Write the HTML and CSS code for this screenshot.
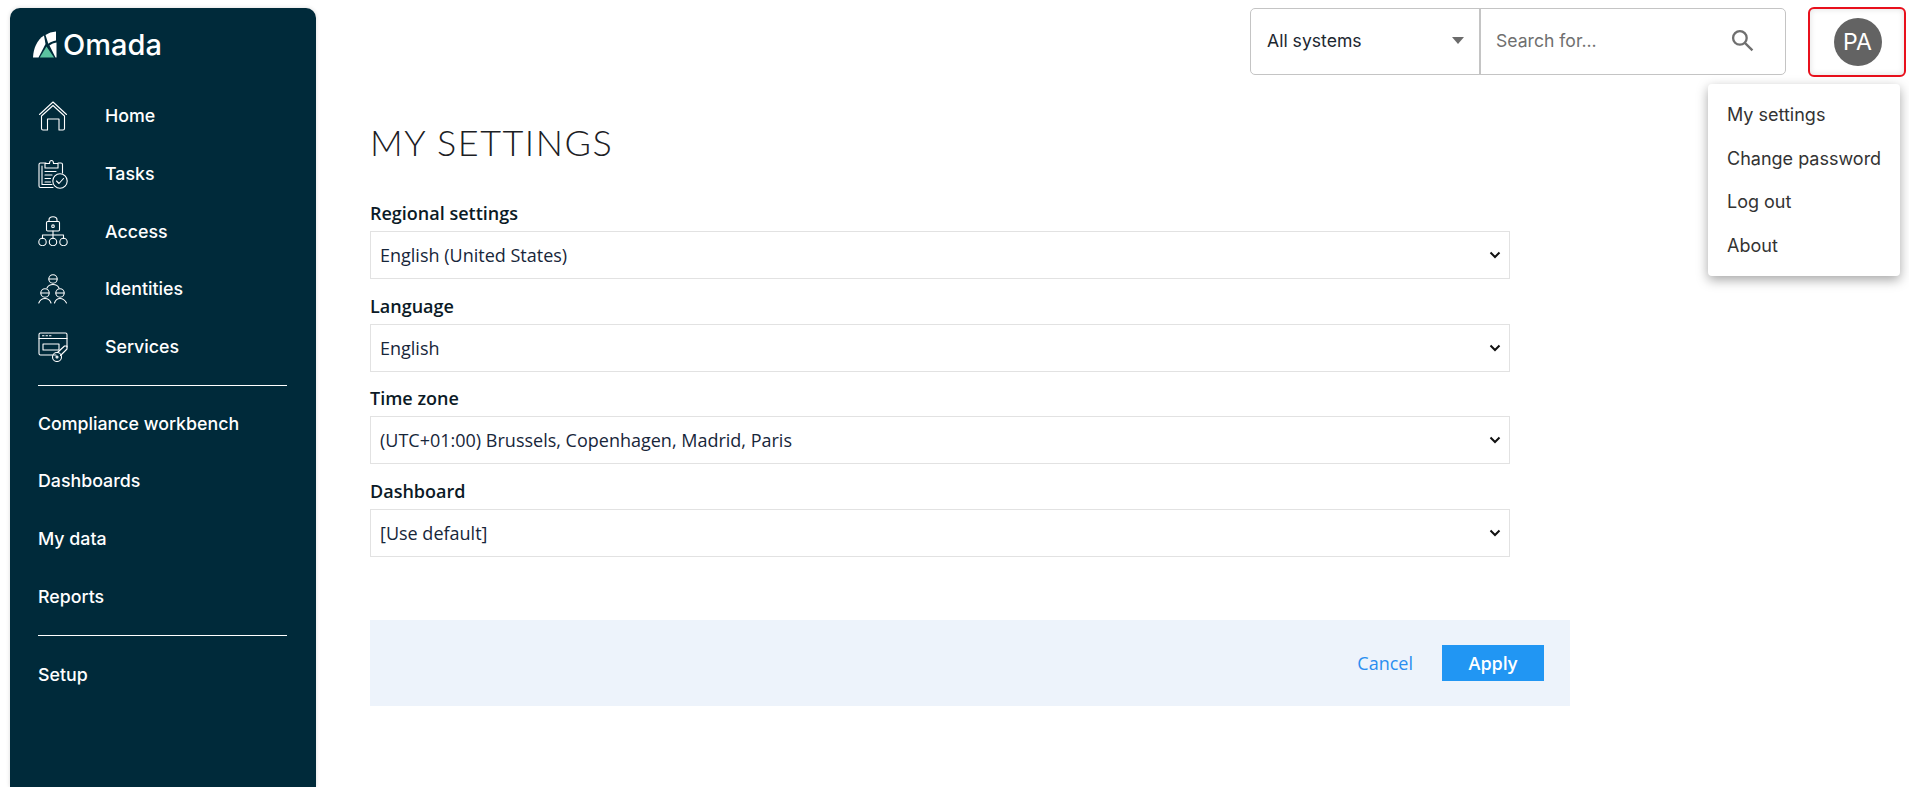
FILE: index.html
```html
<!DOCTYPE html>
<html lang="en">
<head>
<meta charset="utf-8">
<title>My settings</title>
<link rel="stylesheet" href="styles.css">
</head>
<body>
<div class="app">
  <aside class="sidebar">
    <div class="logo">
      <svg class="logo-mark" viewBox="0 0 24 27" width="24" height="27">
        <path fill="#fff" d="M0 26.500C.5 17 4 9 11 4.500L12.500 13 5.500 26.500Z"/>
        <path fill="#fff" d="M12.500 4C15.500 2 19 .8 23 .5V9.500C20 10 17.500 11 15.300 12.800Z"/>
        <path fill="#fff" d="M16.500 14.500C18.500 13 20.800 11.800 23.500 11.500V26.500H22.500Z"/>
        <path fill="#5cc3a0" d="M13.500 15.500 21 26.500H6.800Z"/>
      </svg>
      <span class="logo-text">Omada</span>
    </div>
    <nav class="nav">
      <a class="nav-item">
        <svg class="nav-icon" viewBox="0 0 30 30"><path d="M1.500 13.500 15 1 28.500 13.500"/><path d="M3.500 15 15 4.500 26.500 15V27.500Q26.500 29 25 29H21V18H9.500V29H5Q3.500 29 3.500 27.500Z"/></svg>
        <span>Home</span>
      </a>
      <a class="nav-item">
        <svg class="nav-icon" viewBox="0 0 30 30"><path d="M8 4H2.500Q1 4 1 5.500V27Q1 28.500 2.500 28.500H15"/><path d="M20 4H23Q24.500 4 24.500 5.500V14"/><path d="M4 7V25.500H14"/><path d="M7 4.500H11.500C11.500 .5 15.500 .5 15.500 4.500H20V9H7Z"/><path d="M7 12.500H18M7 16H14M7 19.500H12.500M7 23H12.500"/><circle cx="22" cy="22" r="7.200"/><path d="M18.500 22 21 24.500 25.500 19.500"/></svg>
        <span>Tasks</span>
      </a>
      <a class="nav-item">
        <svg class="nav-icon" viewBox="0 0 30 30"><rect x="8.500" y="5.500" width="13" height="9.500" rx="1.200"/><path d="M11 5.500V4Q11 .8 15 .8T19 4V5.500"/><circle cx="15" cy="10.200" r="1.300"/><path d="M15 15V22.500M4.500 22.500V19H25.500V22.500"/><circle cx="4.500" cy="26" r="3.700"/><circle cx="15" cy="26" r="3.700"/><circle cx="25.500" cy="26" r="3.700"/></svg>
        <span>Access</span>
      </a>
      <a class="nav-item">
        <svg class="nav-icon" viewBox="0 0 30 30"><circle cx="15" cy="5" r="4.200"/><path d="M11 5H19M9 14Q10.500 10.500 15 10.500T21 14"/><circle cx="7" cy="19" r="4.200"/><path d="M3 19H11M.8 29Q2.500 24.500 7 24.500T13 29"/><circle cx="22" cy="19" r="4.200"/><path d="M18 19H26M16.500 29Q18 24.500 22 24.500T28.500 29"/></svg>
        <span>Identities</span>
      </a>
      <a class="nav-item">
        <svg class="nav-icon" viewBox="0 0 30 30"><path d="M18 23H2.500Q1 23 1 21.500V2.500Q1 1 2.500 1H27.500Q29 1 29 2.500V15"/><path d="M1 6.500H29M4.500 3.700H6M8 3.700H9.500M11.500 3.700H13"/><path d="M5 12H21V18H5Z"/><path d="M19.500 20.500 26.500 14H29V17L22.500 23.500"/><circle cx="19" cy="25" r="4.500"/><circle cx="19" cy="25" r="1"/></svg>
        <span>Services</span>
      </a>
      <hr class="nav-rule">
      <a class="nav-item">Compliance workbench</a>
      <a class="nav-item">Dashboards</a>
      <a class="nav-item">My data</a>
      <a class="nav-item">Reports</a>
      <hr class="nav-rule">
      <a class="nav-item">Setup</a>
    </nav>
  </aside>

  <main class="main">
    <header class="topbar">
      <div class="search">
        <div class="scope"><span>All systems</span><i class="caret"></i></div>
        <div class="query">
          <span>Search for...</span>
          <svg class="search-icon" viewBox="0 0 22 22" width="23" height="23"><circle cx="8.500" cy="8.500" r="6.500"/><path d="M13.500 13.500 20.500 20.500"/></svg>
        </div>
      </div>
      <div class="user"><div class="avatar">PA</div></div>
    </header>

    <section class="content">
      <h1 class="title">MY SETTINGS</h1>
      <div class="form">
        <div class="field">
          <div class="label">Regional settings</div>
          <div class="select"><span>English (United States)</span><svg class="chev" viewBox="0 0 12 8" width="12" height="8"><path d="M1.500 1.500 6 6 10.500 1.500"/></svg></div>
        </div>
        <div class="field">
          <div class="label">Language</div>
          <div class="select"><span>English</span><svg class="chev" viewBox="0 0 12 8" width="12" height="8"><path d="M1.500 1.500 6 6 10.500 1.500"/></svg></div>
        </div>
        <div class="field">
          <div class="label">Time zone</div>
          <div class="select"><span>(UTC+01:00) Brussels, Copenhagen, Madrid, Paris</span><svg class="chev" viewBox="0 0 12 8" width="12" height="8"><path d="M1.500 1.500 6 6 10.500 1.500"/></svg></div>
        </div>
        <div class="field">
          <div class="label">Dashboard</div>
          <div class="select"><span>[Use default]</span><svg class="chev" viewBox="0 0 12 8" width="12" height="8"><path d="M1.500 1.500 6 6 10.500 1.500"/></svg></div>
        </div>
      </div>
      <div class="actions">
        <a class="cancel">Cancel</a>
        <button class="apply" type="button">Apply</button>
      </div>
    </section>

    <div class="menu">
      <a>My settings</a>
      <a>Change password</a>
      <a>Log out</a>
      <a>About</a>
    </div>
  </main>
</div>
</body>
</html>
```
FILE: styles.css
```css
* { box-sizing: border-box; }
html, body { margin: 0; height: 100%; overflow: hidden; background: #fff; }
body { font-family: "Open Sans", sans-serif; color: #0b1a26; }

.app { display: flex; height: 787px; padding: 8px 0 0 10px; }

.sidebar {
  width: 306px;
  flex: none;
  background: #002a3a;
  border-radius: 10px 10px 0 0;
  box-shadow: 0 0 4px rgba(0, 0, 0, .15);
  color: #fff;
  font-family: Inter, sans-serif;
  padding: 0 29px 0 28px;
}

.logo { display: flex; align-items: center; height: 79px; margin-left: -5px; padding-bottom: 6px; gap: 6px; }
.logo-mark { flex: none; }
.logo-text { font-size: 29px; font-weight: 500; line-height: 1; }

.nav { display: flex; flex-direction: column; }
.nav-item {
  display: flex;
  align-items: center;
  height: 57.7px;
  font-size: 17.800px;
  font-weight: 500;
  color: #fff;
}
.nav-icon {
  width: 30px;
  height: 30px;
  margin-right: 37px;
  fill: none;
  stroke: #fff;
  stroke-width: 1.100;
  stroke-linecap: round;
  stroke-linejoin: round;
  flex: none;
}
.nav-rule {
  width: 249px;
  margin: 10px 0 8px;
  border: 0;
  border-top: 1px solid #fff;
}
.nav-rule:last-of-type { margin-top: 10px; margin-bottom: 9px; }

.main { position: relative; flex: 1; min-width: 0; }

.topbar { display: flex; justify-content: flex-end; align-items: flex-start; height: 92px; padding-right: 3px; }

.search {
  display: flex;
  width: 536px;
  height: 67px;
  margin-right: 22px;
  padding-bottom: 2px;
  background: #fff;
  border: 1px solid #c4c4c4;
  border-radius: 5px;
  font-family: Inter, sans-serif;
  font-size: 17.600px;
}
.scope {
  display: flex;
  align-items: center;
  justify-content: space-between;
  width: 230px;
  margin-bottom: -2px;
  padding: 0 15px 2px 16px;
  border-right: 2px solid #c4c4c4;
  color: #1c2730;
}
.caret { width: 0; height: 0; border: 6px solid transparent; border-top: 7px solid #6b6b6b; border-bottom: 0; }
.query {
  flex: 1;
  display: flex;
  align-items: center;
  justify-content: space-between;
  padding: 0 31px 0 15px;
  color: #6f6f6f;
}
.search-icon { fill: none; stroke: #6f6f6f; stroke-width: 2.200; }

.user {
  width: 98px;
  height: 70px;
  margin-top: -1px;
  padding-left: 1px;
  display: flex;
  align-items: center;
  justify-content: center;
  border: 2px solid #e8101c;
  border-radius: 6px;
  box-shadow: inset 0 0 6px rgba(0, 0, 0, .12);
}
.avatar {
  width: 48px;
  height: 48px;
  border-radius: 50%;
  background: #636363;
  color: #fff;
  font-family: Inter, sans-serif;
  font-size: 23px;
  display: flex;
  align-items: center;
  justify-content: center;
}

.content { padding: 0 0 0 54px; width: 1254px; }
.title {
  margin: 0 0 17px;
  height: 84px;
  display: flex;
  align-items: center;
  font-family: Lato, sans-serif;
  font-weight: 300;
  font-size: 36px;
  letter-spacing: 1.500px;
  line-height: 1;
  color: #1c2024;
}
.form { display: flex; flex-direction: column; width: 1140px; }
.field { height: 92.500px; }
.label { font-size: 18px; font-weight: 600; line-height: 24px; margin-bottom: 6px; color: #0b1a26; }
.select {
  height: 48px;
  display: flex;
  align-items: center;
  justify-content: space-between;
  padding: 0 8px 0 9px;
  border: 1px solid #e2e2e2;
  font-size: 18px;
  color: #17263a;
}
.chev { fill: none; stroke: #111; stroke-width: 2; }

.actions {
  margin-top: 49px;
  width: 1200px;
  height: 86px;
  background: #edf3fb;
  display: flex;
  align-items: center;
  justify-content: flex-end;
  padding-right: 26px;
  gap: 29px;
  font-size: 18px;
}
.cancel { color: #2a8ef0; font-weight: 500; }
.apply {
  width: 102px;
  height: 36px;
  border: 0;
  background: #2196f3;
  color: #fff;
  font-family: "Open Sans", sans-serif;
  font-size: 18px;
  font-weight: 600;
}

.menu {
  position: absolute;
  left: 1392px;
  top: 76px;
  width: 192px;
  height: 192px;
  padding: 9px 0 9px 19px;
  display: flex;
  flex-direction: column;
  background: #fff;
  border-radius: 4px;
  box-shadow: 0 4px 12px rgba(0, 0, 0, .35);
  font-family: Inter, sans-serif;
  font-size: 18px;
  color: #333;
}
.menu a { display: flex; align-items: center; height: 43.500px; }
```
